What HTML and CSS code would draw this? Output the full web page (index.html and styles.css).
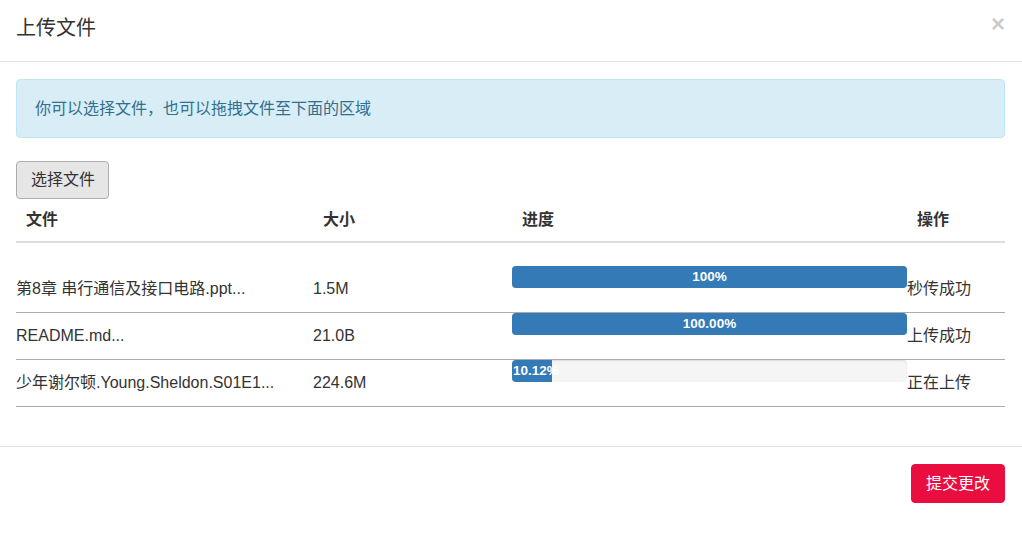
FILE: index.html
```html
<!DOCTYPE html>
<html lang="zh-CN">
<head>
<meta charset="utf-8">
<title>上传文件</title>
<link rel="stylesheet" href="styles.css">
</head>
<body>
<div class="modal">
  <div class="modal-header">
    <h4 class="modal-title">上传文件</h4>
    <button class="close" type="button">×</button>
  </div>
  <div class="modal-body">
    <div class="alert">你可以选择文件，也可以拖拽文件至下面的区域</div>
    <button class="btn-default" type="button">选择文件</button>
    <div class="table-head">
      <div class="th">文件</div>
      <div class="th">大小</div>
      <div class="th">进度</div>
      <div class="th">操作</div>
    </div>
    <div class="rows">
      <div class="row">
        <div class="cell">第8章 串行通信及接口电路.ppt...</div>
        <div class="cell">1.5M</div>
        <div class="progress"><div class="bar" style="width:100%">100%</div></div>
        <div class="cell">秒传成功</div>
      </div>
      <div class="row">
        <div class="cell">README.md...</div>
        <div class="cell">21.0B</div>
        <div class="progress"><div class="bar" style="width:100%">100.00%</div></div>
        <div class="cell">上传成功</div>
      </div>
      <div class="row">
        <div class="cell">少年谢尔顿.Young.Sheldon.S01E1...</div>
        <div class="cell">224.6M</div>
        <div class="progress"><div class="bar partial" style="width:10.12%">10.12%</div></div>
        <div class="cell">正在上传</div>
      </div>
    </div>
  </div>
  <div class="modal-footer">
    <button class="btn-submit" type="button">提交更改</button>
  </div>
</div>
</body>
</html>
```
FILE: styles.css
```css
* { box-sizing: border-box; }
html, body { margin: 0; padding: 0; background: #fff; }
body {
  font-family: "Liberation Sans", "Noto Sans CJK SC", sans-serif;
  font-size: 16px;
  line-height: 22px;
  color: #333;
}
.modal { width: 1022px; }
.modal-header {
  height: 62px;
  padding: 14px 16px 0 16px;
  border-bottom: 1px solid #e5e5e5;
  display: flex;
  justify-content: space-between;
  align-items: flex-start;
}
.modal-title {
  margin: 0;
  font-size: 20px;
  line-height: 28px;
  font-weight: normal;
  color: #333;
}
.close {
  margin: -2px 1px 0 0;
  padding: 0;
  border: 0;
  background: transparent;
  font-family: "Liberation Sans", sans-serif;
  font-size: 24px;
  font-weight: bold;
  line-height: 24px;
  color: #000;
  opacity: 0.2;
}
.modal-body { padding: 17px 17px 39px 16px; }
.alert {
  height: 59px;
  padding: 18px 18px;
  border: 1px solid #bce8f1;
  border-radius: 4px;
  background: #d9edf7;
  color: #31708f;
  line-height: 21px;
  font-size: 16px;
}
.btn-default {
  display: block;
  margin-top: 23px;
  height: 38px;
  padding: 0 13px 0 14px;
  font-family: inherit;
  font-size: 16px;
  line-height: 36px;
  color: #333;
  background: #e6e6e6;
  border: 1px solid #adadad;
  border-radius: 4px;
}
.table-head, .row {
  display: grid;
  grid-template-columns: 297px 199px 395px 1fr;
}
.table-head {
  height: 44px;
  border-bottom: 2px solid #ddd;
}
.th {
  padding-left: 10px;
  font-weight: bold;
  line-height: 42px;
}
.rows { margin-top: 23px; }
.row {
  height: 47px;
  border-bottom: 1px solid #ababab;
}
.cell {
  line-height: 46px;
  white-space: nowrap;
}
.progress {
  height: 22px;
  border-radius: 4px;
  background: #f5f5f5;
  box-shadow: inset 0 1px 2px rgba(0,0,0,0.1);
  overflow: hidden;
}
.bar {
  height: 22px;
  background: #337ab7;
  color: #fff;
  font-size: 13.5px;
  font-weight: bold;
  line-height: 22px;
  text-align: center;
  white-space: nowrap;
  overflow: visible;
}
.bar.partial { text-align: left; padding-left: 1px; }
.modal-footer {
  border-top: 1px solid #e5e5e5;
  padding: 17px 17px 0 16px;
  display: flex;
  justify-content: flex-end;
}
.btn-submit {
  height: 39px;
  padding: 0 14px;
  font-family: inherit;
  font-size: 16px;
  line-height: 37px;
  color: #fff;
  background: #e90e3f;
  border: 1px solid #e90e3f;
  border-radius: 4px;
}
```
